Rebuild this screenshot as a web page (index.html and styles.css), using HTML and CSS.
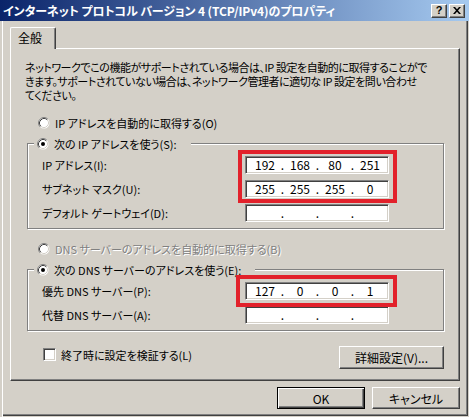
FILE: index.html
```html
<!DOCTYPE html>
<html lang="ja">
<head>
<meta charset="utf-8">
<title>TCP/IPv4 のプロパティ</title>
<link rel="stylesheet" href="styles.css">
</head>
<body>
<svg class="defs" width="0" height="0" aria-hidden="true">
  <defs>
    <symbol id="radio" viewBox="0 0 12 12">
      <circle cx="6" cy="6" r="5.5" fill="#fff"/>
      <path d="M2.11 9.89 A5.5 5.5 0 0 1 9.89 2.11" fill="none" stroke="#808080" stroke-width="1"/>
      <path d="M2.82 9.18 A4.5 4.5 0 0 1 9.18 2.82" fill="none" stroke="#404040" stroke-width="1"/>
      <path d="M9.18 2.82 A4.5 4.5 0 0 1 2.82 9.18" fill="none" stroke="#d4d0c8" stroke-width="1"/>
    </symbol>
  </defs>
</svg>
<div class="window">
  <div class="titlebar">
    <span class="title">インターネット プロトコル バージョン 4 (TCP/IPv4)のプロパティ</span>
    <div class="caption-buttons">
      <span class="cap-btn help">?</span>
      <span class="cap-btn close">
        <svg width="8" height="7" viewBox="0 0 8 7"><path d="M0 0h2l2 2.2L6 0h2L5 3.5 8 7H6L4 4.8 2 7H0l3-3.5z" fill="#000"/></svg>
      </span>
    </div>
  </div>
  <div class="client">
    <div class="tabs">
      <div class="tab active">全般</div>
    </div>
    <div class="panel">
      <p class="intro">ネットワークでこの機能がサポートされている場合は、IP 設定を自動的に取得することがで<br>きます。サポートされていない場合は、ネットワーク管理者に適切な IP 設定を問い合わせ<br>てください。</p>

      <div class="option">
        <svg class="radio" width="12" height="12"><use href="#radio"/></svg>
        <span>IP アドレスを自動的に取得する(O)</span>
      </div>

      <div class="group">
        <div class="legend">
          <svg class="radio" width="12" height="12"><use href="#radio"/><circle cx="6" cy="6" r="2" fill="#000"/></svg>
          <span>次の IP アドレスを使う(S):</span>
        </div>
        <div class="fields">
          <span class="label r1">IP アドレス(I):</span>
          <div class="ip r1"><span>192</span><span class="dot">.</span><span>168</span><span class="dot">.</span><span>80</span><span class="dot">.</span><span>251</span></div>
          <span class="label r2">サブネット マスク(U):</span>
          <div class="ip r2"><span>255</span><span class="dot">.</span><span>255</span><span class="dot">.</span><span>255</span><span class="dot">.</span><span>0</span></div>
          <span class="label r3">デフォルト ゲートウェイ(D):</span>
          <div class="ip r3"><span></span><span class="dot">.</span><span></span><span class="dot">.</span><span></span><span class="dot">.</span><span></span></div>
          <div class="highlight span-2"></div>
        </div>
      </div>

      <div class="option option-dns disabled">
        <svg class="radio" width="12" height="12"><use href="#radio"/></svg>
        <span>DNS サーバーのアドレスを自動的に取得する(B)</span>
      </div>

      <div class="group group-dns">
        <div class="legend">
          <svg class="radio" width="12" height="12"><use href="#radio"/><circle cx="6" cy="6" r="2" fill="#000"/></svg>
          <span>次の DNS サーバーのアドレスを使う(E):</span>
        </div>
        <div class="fields">
          <span class="label r1">優先 DNS サーバー(P):</span>
          <div class="ip r1"><span>127</span><span class="dot">.</span><span>0</span><span class="dot">.</span><span>0</span><span class="dot">.</span><span>1</span></div>
          <span class="label r2">代替 DNS サーバー(A):</span>
          <div class="ip r2"><span></span><span class="dot">.</span><span></span><span class="dot">.</span><span></span><span class="dot">.</span><span></span></div>
          <div class="highlight span-1"></div>
        </div>
      </div>

      <div class="panel-footer">
        <div class="check-row">
          <span class="checkbox"></span>
          <span>終了時に設定を検証する(L)</span>
        </div>
        <span class="btn advanced">詳細設定(V)...</span>
      </div>
    </div>
    <div class="dialog-buttons">
      <span class="btn default">OK</span>
      <span class="btn">キャンセル</span>
    </div>
  </div>
</div>
</body>
</html>
```

FILE: styles.css
```css
* { box-sizing: border-box; }
html, body { margin: 0; padding: 0; }
body {
  width: 469px;
  height: 417px;
  overflow: hidden;
  background: #d4d0c8;
  font-family: "Noto Sans CJK JP", "Noto Sans", sans-serif;
  font-size: 11px;
  font-feature-settings: "palt";
  color: #000;
}
.defs { position: absolute; width: 0; height: 0; }

.window {
  width: 469px;
  height: 417px;
  display: flex;
  flex-direction: column;
  background: #d4d0c8;
}

.titlebar {
  height: 21px;
  flex: none;
  display: flex;
  align-items: center;
  justify-content: space-between;
  padding: 0 4px 0 3px;
  background: linear-gradient(to right, #0a246a, #a6caf0);
}
.title {
  color: #fff;
  font-weight: bold;
  font-size: 12px;
  line-height: 14px;
  white-space: nowrap;
  letter-spacing: -0.1px;
}
.caption-buttons { display: flex; gap: 2px; }
.cap-btn {
  width: 16px;
  height: 14px;
  display: flex;
  align-items: center;
  justify-content: center;
  background: #d4d0c8;
  border: 1px solid;
  border-color: #fff #404040 #404040 #fff;
  box-shadow: inset -1px -1px 0 #808080;
  font-family: "Liberation Sans", sans-serif;
  font-weight: bold;
  font-size: 11px;
  line-height: 1;
}

.client {
  flex: 1;
  padding: 6px 0 0 10px;
  box-shadow: inset 2px 0 0 #d4d0c8, inset 3px 0 0 #fff,
              inset -1px -1px 0 #d4d0c8, inset -2px -2px 0 #404040, inset -3px -3px 0 #808080;
}

.tabs { display: flex; height: 21px; }
.tab {
  position: relative;
  z-index: 1;
  width: 46px;
  height: 22px;
  padding: 3px 0 0 7px;
  background: #d4d0c8;
  border-top: 1px solid #fff;
  border-left: 1px solid #fff;
  border-right: 1px solid #404040;
  border-top-left-radius: 2px;
  border-top-right-radius: 2px;
  box-shadow: inset -1px 0 0 #808080;
  font-size: 12px;
  line-height: 14px;
}

.panel {
  width: 450px;
  height: 333px;
  border: 1px solid;
  border-color: #fff #404040 #404040 #fff;
  box-shadow: inset -1px -1px 0 #808080;
  padding: 11px 15px 0 14px;
  display: flex;
  flex-direction: column;
}

.intro {
  margin: 0;
  line-height: 14px;
  white-space: nowrap;
  letter-spacing: -0.45px;
}

.option {
  display: flex;
  align-items: center;
  gap: 5px;
  height: 14px;
  margin: 14px 0 0 13px;
  white-space: nowrap;
}
.option-dns { margin-top: 13px; }
.disabled { color: #808080; text-shadow: 1px 1px 0 #fff; }
.radio { flex: none; display: block; }

.group {
  margin: 13px 0 0 2px;
  border: 1px solid #808080;
  box-shadow: 1px 1px 0 #fff, inset 1px 1px 0 #fff;
  padding: 0 52px 6px 14px;
}
.group-dns { margin-top: 13px; }
.legend {
  display: flex;
  align-items: center;
  gap: 5px;
  width: max-content;
  height: 14px;
  margin: -7px 0 0 -8px;
  padding: 0 14px 0 3px;
  background: #d4d0c8;
  white-space: nowrap;
}

.fields {
  display: grid;
  grid-template-columns: 203px 144px;
  row-gap: 6px;
  align-items: center;
  margin-top: 5px;
}
.label { grid-column: 1; white-space: nowrap; }
.r1 { grid-row: 1; }
.r2 { grid-row: 2; }
.r3 { grid-row: 3; }

.ip {
  grid-column: 2;
  height: 18px;
  background: #fff;
  border: 1px solid;
  border-color: #808080 #fff #fff #808080;
  box-shadow: inset 1px 1px 0 #404040, inset -1px -1px 0 #d4d0c8;
  padding-left: 5px;
  display: grid;
  grid-template-columns: 28px 7px 28px 7px 28px 7px 28px;
  align-items: center;
  font-size: 12px;
  line-height: 14px;
  text-align: center;
}

.highlight {
  grid-column: 2;
  align-self: stretch;
  border: 4px solid #e2212b;
  margin: -6px -8px -5px -7px;
  pointer-events: none;
  z-index: 2;
}
.span-2 { grid-row: 1 / span 2; }
.span-1 { grid-row: 1 / span 1; margin: -7px -8px -7px -9px; }

.panel-footer {
  display: flex;
  justify-content: space-between;
  align-items: flex-start;
  margin-top: 15px;
}
.check-row {
  display: flex;
  align-items: center;
  gap: 5px;
  margin: 2px 0 0 18px;
  height: 13px;
}
.checkbox {
  width: 13px;
  height: 13px;
  background: #fff;
  border: 1px solid;
  border-color: #808080 #fff #fff #808080;
  box-shadow: inset 1px 1px 0 #404040, inset -1px -1px 0 #d4d0c8;
}

.btn {
  display: flex;
  align-items: center;
  justify-content: center;
  width: 88px;
  height: 22px;
  background: #d4d0c8;
  border: 1px solid;
  border-color: #fff #404040 #404040 #fff;
  box-shadow: inset -1px -1px 0 #808080;
  font-size: 12px;
  white-space: nowrap;
}
.btn.advanced { width: 105px; height: 23px; }
.btn.default {
  border-color: #000;
  box-shadow: inset 1px 1px 0 #fff, inset -1px -1px 0 #404040, inset -2px -2px 0 #808080;
}

.dialog-buttons {
  width: 450px;
  display: flex;
  justify-content: flex-end;
  gap: 7px;
  margin-top: 6px;
}
```
